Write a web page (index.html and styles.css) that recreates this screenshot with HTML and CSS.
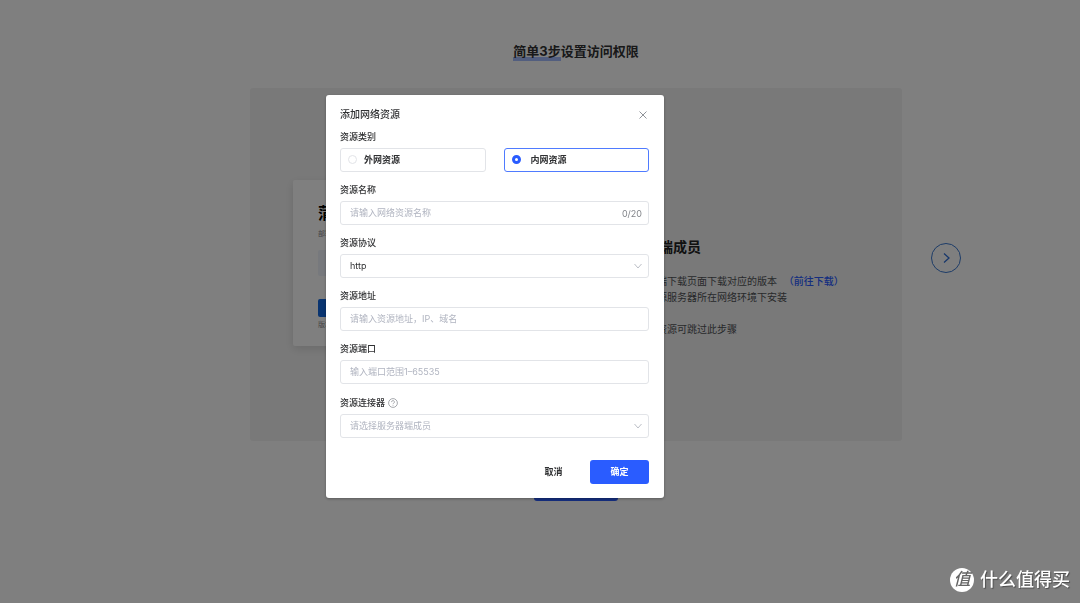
FILE: index.html
```html
<!DOCTYPE html>
<html lang="zh-CN">
<head>
    <meta charset="UTF-8">
    <meta name="viewport" content="width=device-width, initial-scale=1.0">
    <title>添加网络资源</title>
    <link rel="stylesheet" href="styles.css">
</head>
<body>

<main class="guide">
    <h1 class="guide-title"><span class="mark">简单3步</span>设置访问权限</h1>
    <div class="slider">
        <section class="panel">
            <div class="preview">
                <h2>蒲公英</h2>
                <p>部署网络</p>
                <div class="preview-field"></div>
                <div class="preview-button"></div>
                <p>版本信息</p>
            </div>
            <div class="step">
                <h2>服务器端成员</h2>
                <p>在服务器端下载页面下载对应的版本 <a href="#">（前往下载）</a></p>
                <p>请在该资源服务器所在网络环境下安装</p>
                <p class="step-note">如无内网资源可跳过此步骤</p>
            </div>
        </section>
        <button class="next" type="button" aria-label="下一步">
            <svg width="16" height="16" viewBox="0 0 16 16"><path d="M6 3.5l5 4.5-5 4.5"/></svg>
        </button>
    </div>
    <button class="start" type="button" aria-label="开始"></button>
</main>

<div class="overlay">
    <form class="dialog" role="dialog" aria-labelledby="dialogTitle">
        <header class="dialog-header">
            <h2 id="dialogTitle">添加网络资源</h2>
            <button class="close" type="button" aria-label="关闭">
                <svg width="12" height="12" viewBox="0 0 12 12"><path d="M2.5 2.5l7 7M9.5 2.5l-7 7"/></svg>
            </button>
        </header>

        <fieldset class="field">
            <legend class="label">资源类别</legend>
            <div class="options">
                <label class="option"><input type="radio" name="type">外网资源</label>
                <label class="option active"><input type="radio" name="type" checked>内网资源</label>
            </div>
        </fieldset>

        <div class="field">
            <label class="label" for="name">资源名称</label>
            <div class="control">
                <input type="text" id="name" maxlength="20" placeholder="请输入网络资源名称">
                <span class="count">0/20</span>
            </div>
        </div>

        <div class="field">
            <label class="label" for="protocol">资源协议</label>
            <div class="control">
                <select id="protocol">
                    <option>http</option>
                    <option>https</option>
                </select>
                <svg class="arrow" width="10" height="10" viewBox="0 0 10 10"><path d="M1.5 3l3.5 4 3.5-4"/></svg>
            </div>
        </div>

        <div class="field">
            <label class="label" for="address">资源地址</label>
            <div class="control">
                <input type="text" id="address" placeholder="请输入资源地址，IP、域名">
            </div>
        </div>

        <div class="field">
            <label class="label" for="port">资源端口</label>
            <div class="control">
                <input type="text" id="port" placeholder="输入端口范围1–65535">
            </div>
        </div>

        <div class="field">
            <label class="label with-help" for="connector">资源连接器
                <svg class="help" width="10" height="10" viewBox="0 0 10 10"><circle cx="5" cy="5" r="4.4"/><path d="M3.6 4.1a1.4 1.4 0 1 1 2.1 1.1c-.5.3-.7.5-.7 1M5 7v.7"/></svg>
            </label>
            <div class="control">
                <select id="connector" class="empty">
                    <option>请选择服务器端成员</option>
                </select>
                <svg class="arrow" width="10" height="10" viewBox="0 0 10 10"><path d="M1.5 3l3.5 4 3.5-4"/></svg>
            </div>
        </div>

        <footer class="dialog-footer">
            <button class="btn" type="button">取消</button>
            <button class="btn primary" type="submit">确定</button>
        </footer>
    </form>
</div>

<div class="watermark"><span class="watermark-logo">值</span>什么值得买</div>

</body>
</html>
```

FILE: styles.css
```css
* {
    box-sizing: border-box;
}

body {
    margin: 0;
    min-height: 100vh;
    background-color: #fff;
    color: #303133;
    font-family: Inter, "Noto Sans CJK SC", sans-serif;
    font-size: 9px;
}

h1, h2, p {
    margin: 0;
}

button, input, select {
    font-family: inherit;
    font-size: inherit;
    color: inherit;
}

button {
    padding: 0;
    border: none;
    background: none;
    cursor: pointer;
}

svg {
    fill: none;
    stroke: currentColor;
}

/* Страница под затемнением */
.guide {
    padding: 40px 119px 0 250px;
}

.guide-title {
    margin-right: 59px;
    font-size: 13px;
    line-height: 22px;
    text-align: center;
}

.mark {
    padding-bottom: 2px;
    background: linear-gradient(#a4bcff, #a4bcff) 0 100% / 100% 4px no-repeat;
}

.slider {
    display: flex;
    align-items: center;
    gap: 29px;
    margin-top: 26px;
}

.panel {
    flex: 1;
    display: flex;
    align-items: center;
    gap: 84px;
    height: 353px;
    padding: 0 43px 3px;
    background-color: #f3f3f3;
    border-radius: 3px;
}

.preview {
    width: 240px;
    height: 166px;
    padding: 22px 25px;
    background-color: #fff;
    border-radius: 2px;
    box-shadow: 0 3px 10px rgba(0, 0, 0, 0.12);
    color: #888;
    font-size: 7px;
    line-height: 10px;
}

.preview h2 {
    margin-bottom: 5px;
    color: #000;
    font-size: 16px;
    line-height: 22px;
}

.preview-field {
    height: 26px;
    margin: 11px 0 23px;
    background-color: #eef2fb;
    border-radius: 2px;
}

.preview-button {
    height: 18px;
    margin-bottom: 3px;
    background-color: #1268e0;
    border-radius: 2px;
}

.step {
    padding-top: 48px;
    color: #505256;
    font-size: 10px;
    line-height: 16px;
    white-space: nowrap;
}

.step h2 {
    margin-bottom: 16px;
    color: #222;
    font-size: 14px;
    line-height: 20px;
}

.step a {
    margin-left: 4px;
    color: #2a5cff;
    font-weight: 500;
    text-decoration: none;
}

.step-note {
    margin-top: 16px;
}

.next {
    display: flex;
    align-items: center;
    justify-content: center;
    width: 30px;
    height: 30px;
    margin-bottom: 14px;
    border: 1px solid #3a78d0;
    border-radius: 50%;
    color: #2f6fd6;
}

.next svg {
    stroke-width: 1.3;
}

.start {
    display: block;
    width: 84px;
    height: 24px;
    margin: 36px 0 0 284px;
    background-color: #2a5cff;
    border-radius: 3px;
}

/* Диалог */
.overlay {
    position: fixed;
    inset: 0;
    padding: 95px 0 0 326px;
    background-color: rgba(0, 0, 0, 0.5);
}

.dialog {
    width: 338px;
    padding: 8px 15px 14px 14px;
    background-color: #fff;
    border-radius: 3px;
    box-shadow: 0 1px 3px rgba(0, 0, 0, 0.3);
}

.dialog-header {
    display: flex;
    align-items: center;
    justify-content: space-between;
    height: 23px;
}

.dialog-header h2 {
    padding-bottom: 2px;
    font-size: 10px;
    font-weight: 500;
    line-height: 20px;
}

.close {
    width: 12px;
    height: 12px;
    color: #909399;
}

.close svg {
    display: block;
}

.field {
    min-width: 0;
    margin: 0 0 7px;
    padding: 0;
    border: none;
}

.label {
    display: flex;
    align-items: center;
    gap: 3px;
    padding: 0;
    font-weight: 500;
    line-height: 22px;
}

.with-help {
    padding-top: 1px;
}

.help {
    color: #909399;
    stroke-width: 0.8;
}

.options {
    display: grid;
    grid-template-columns: 1fr 1fr;
    gap: 18px;
}

.option {
    display: flex;
    align-items: center;
    gap: 7px;
    height: 24px;
    padding: 0 7px 2px;
    border: 1px solid #e2e4e8;
    border-radius: 3px;
    font-weight: bold;
}

.option.active {
    gap: 10px;
    border-color: #4f7bff;
}

.option input {
    appearance: none;
    width: 9px;
    height: 9px;
    margin: 0;
    border: 1px solid #e2e4e8;
    border-radius: 50%;
}

.option input:checked {
    border: 3px solid #2a5cff;
}

.control {
    display: flex;
    align-items: center;
    height: 24px;
    padding-right: 5px;
    border: 1px solid #e2e4e8;
    border-radius: 3px;
}

.control input, .control select {
    flex: 1;
    min-width: 0;
    height: 22px;
    padding: 0 9px 2px;
    border: none;
    outline: none;
    background: none;
    appearance: none;
}

.control input::placeholder, .control .empty {
    color: #b0b4c0;
}

.count {
    padding-right: 1px;
    color: #808388;
}

.arrow {
    color: #b4b8c0;
    stroke-width: 0.9;
}

.dialog-footer {
    display: flex;
    justify-content: flex-end;
    gap: 7px;
    margin-top: 22px;
}

.btn {
    width: 59px;
    height: 24px;
    padding-bottom: 2px;
    border-radius: 3px;
    font-weight: bold;
}

.primary {
    background-color: #2a5cff;
    color: #fff;
}

/* Водяной знак */
.watermark {
    position: fixed;
    right: 10px;
    bottom: 10px;
    display: flex;
    align-items: center;
    gap: 6px;
    color: #fff;
    font-size: 18px;
    font-weight: 500;
    line-height: 26px;
    text-shadow: 1px 1px 1px rgba(0, 0, 0, 0.4);
}

.watermark-logo {
    width: 24px;
    height: 24px;
    background-color: #fff;
    border-radius: 50%;
    color: #666;
    font-size: 17px;
    font-style: italic;
    line-height: 23px;
    text-align: center;
    text-shadow: none;
}
```
